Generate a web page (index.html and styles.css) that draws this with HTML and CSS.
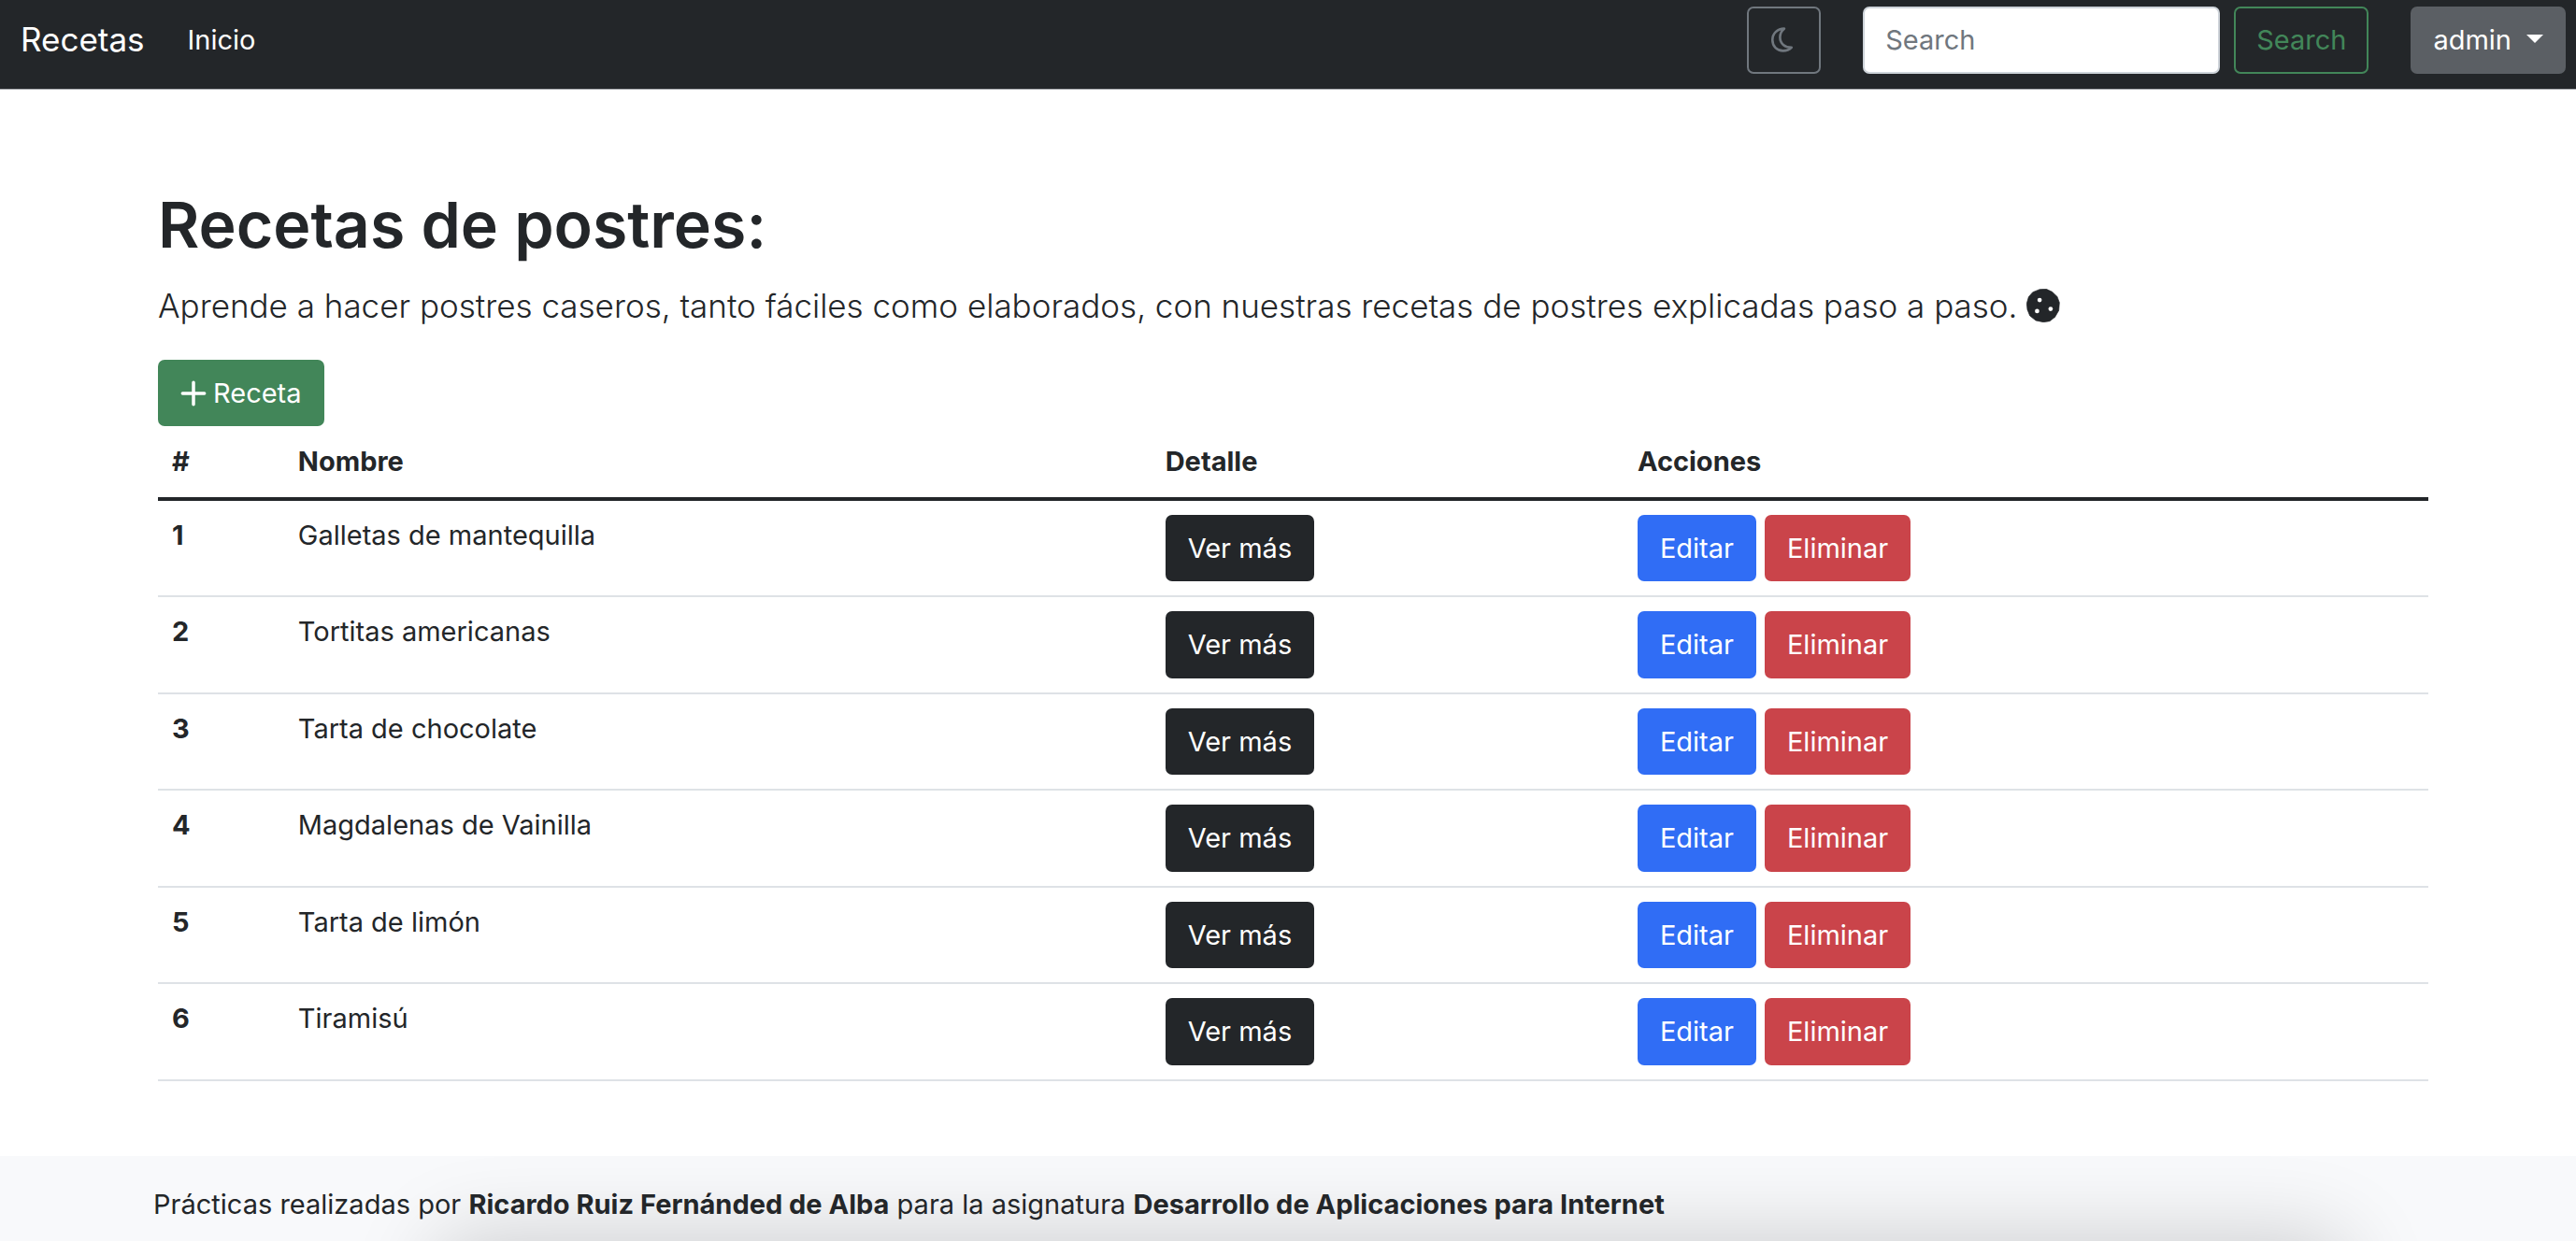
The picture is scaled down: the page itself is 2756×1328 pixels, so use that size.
FILE: index.html
```html
<!DOCTYPE html>
<html lang="es">
<head>
  <meta charset="utf-8">
  <meta name="viewport" content="width=device-width, initial-scale=1">
  <title>Recetas</title>
  <link rel="stylesheet" href="styles.css">
</head>
<body>
  <header class="navbar">
    <a class="navbar-brand" href="#">Recetas</a>
    <nav class="navbar-nav">
      <a class="nav-link" href="#">Inicio</a>
    </nav>
    <button class="btn btn-theme" type="button" aria-label="Modo oscuro">
      <svg class="icon-moon" viewBox="104 87 74 81" aria-hidden="true"><path d="M147 91C124 91 108 107 108 128C108 149 123 164 143 164C155 164 164 160 171 153C149 153 133 141 133 119C133 107 138 98 147 91Z" fill="none" stroke="currentColor" stroke-width="8" stroke-linejoin="round"/></svg>
    </button>
    <form class="search" role="search">
      <input class="search-input" type="search" placeholder="Search" aria-label="Search">
      <button class="btn btn-outline" type="submit">Search</button>
    </form>
    <button class="btn btn-user" type="button" aria-haspopup="true">admin<span class="caret"></span></button>
  </header>

  <main class="container">
    <h1 class="title">Recetas de postres:</h1>
    <p class="lead">Aprende a hacer postres caseros, tanto fáciles como elaborados, con nuestras recetas de postres explicadas paso a paso.
      <svg class="icon-cookie" viewBox="66 57 105 107" aria-hidden="true"><path fill="currentColor" d="M107 59L128 58L147 67L163 82L170 101L168 126L156 147L139 160L119 163L95 158L76 143L68 123L66 104L72 83L85 68Z" stroke="currentColor" stroke-width="2" stroke-linejoin="round"/><g fill="#fff"><circle cx="107" cy="93" r="7"/><circle cx="99" cy="128" r="7"/><circle cx="142" cy="121" r="7"/></g></svg></p>
    <a class="btn btn-success" href="#"><svg class="icon-plus" viewBox="0 0 24 24" aria-hidden="true"><path d="M12 2V22M2 12H22" fill="none" stroke="currentColor" stroke-width="3" stroke-linecap="round"/></svg>Receta</a>
    <table class="table">
      <colgroup><col class="col-num"><col class="col-name"><col class="col-detail"><col></colgroup>
      <thead>
        <tr><th scope="col">#</th><th scope="col">Nombre</th><th scope="col">Detalle</th><th scope="col">Acciones</th></tr>
      </thead>
      <tbody>
        <tr><th scope="row">1</th><td>Galletas de mantequilla</td><td><a class="btn btn-dark" href="#">Ver más</a></td><td><div class="actions"><a class="btn btn-primary" href="#">Editar</a><button class="btn btn-danger" type="button">Eliminar</button></div></td></tr>
        <tr><th scope="row">2</th><td>Tortitas americanas</td><td><a class="btn btn-dark" href="#">Ver más</a></td><td><div class="actions"><a class="btn btn-primary" href="#">Editar</a><button class="btn btn-danger" type="button">Eliminar</button></div></td></tr>
        <tr><th scope="row">3</th><td>Tarta de chocolate</td><td><a class="btn btn-dark" href="#">Ver más</a></td><td><div class="actions"><a class="btn btn-primary" href="#">Editar</a><button class="btn btn-danger" type="button">Eliminar</button></div></td></tr>
        <tr><th scope="row">4</th><td>Magdalenas de Vainilla</td><td><a class="btn btn-dark" href="#">Ver más</a></td><td><div class="actions"><a class="btn btn-primary" href="#">Editar</a><button class="btn btn-danger" type="button">Eliminar</button></div></td></tr>
        <tr><th scope="row">5</th><td>Tarta de limón</td><td><a class="btn btn-dark" href="#">Ver más</a></td><td><div class="actions"><a class="btn btn-primary" href="#">Editar</a><button class="btn btn-danger" type="button">Eliminar</button></div></td></tr>
        <tr><th scope="row">6</th><td>Tiramisú</td><td><a class="btn btn-dark" href="#">Ver más</a></td><td><div class="actions"><a class="btn btn-primary" href="#">Editar</a><button class="btn btn-danger" type="button">Eliminar</button></div></td></tr>
      </tbody>
    </table>
  </main>

  <footer class="footer">
    <p class="footer-text">Prácticas realizadas por <strong>Ricardo Ruiz Fernánded de Alba</strong> para la asignatura <strong>Desarrollo de Aplicaciones para Internet</strong></p>
  </footer>
</body>
</html>
```
FILE: styles.css
```css
*, *::before, *::after { box-sizing: border-box; }

body {
  margin: 0;
  min-height: 100vh;
  display: flex;
  flex-direction: column;
  font-family: Inter, "Liberation Sans", sans-serif;
  font-size: 29px;
  line-height: 1.5;
  color: #232629;
  background: #fff;
}

/* Buttons */
.btn {
  display: inline-block;
  padding: 12px 22px;
  border: 2px solid transparent;
  border-radius: 7px;
  font: inherit;
  line-height: 1.5;
  color: #fff;
  background: transparent;
  text-decoration: none;
  white-space: nowrap;
}
.btn-success { background: #428659; }
.btn-dark { background: #232629; }
.btn-primary { background: #306df5; }
.btn-danger { background: #ca444a; }
.btn-outline { color: #428659; border-color: #428659; }

/* Navbar */
.navbar {
  display: flex;
  align-items: flex-start;
  padding: 7px 11px 16px 22px;
  background: #232629;
  border-bottom: 1px solid #a9acb0;
}
.navbar-brand {
  margin-right: 32px;
  padding: 9px 0;
  font-size: 35px;
  color: #fff;
  text-decoration: none;
}
.navbar-nav { flex: 1; }
.nav-link {
  display: inline-block;
  padding: 14px;
  color: #fff;
  text-decoration: none;
}
.btn-theme {
  display: flex;
  align-items: center;
  align-self: stretch;
  width: 79px;
  padding: 0 24px;
  color: #70777e;
  border-color: #70777e;
}
.icon-moon { width: 24px; height: 27px; }
.search {
  display: flex;
  gap: 15px;
  margin: 0 45px;
}
.search-input {
  width: 382px;
  padding: 12px 22px;
  border: 2px solid #ced4da;
  border-radius: 7px;
  font: inherit;
  line-height: 1.5;
  background: #fff;
  appearance: none;
}
.search-input::placeholder { color: #70777e; opacity: 1; }
.btn-user { background: #5b5f64; }
.caret {
  display: inline-block;
  margin-left: 16px;
  vertical-align: 7px;
  border: 9px solid transparent;
  border-top-color: #fff;
  border-bottom: 0;
}

/* Content */
.container {
  flex: 1;
  padding: 100px 158px 79px 169px;
}
.title {
  margin: 0 0 15px;
  font-size: 68px;
  font-weight: 600;
  line-height: 88px;
}
.lead {
  margin: 0 0 30px;
  font-size: 35px;
  font-weight: 300;
  line-height: 56px;
}
.icon-cookie { width: 36px; height: 36px; vertical-align: -5px; }
.icon-plus { width: 28px; height: 28px; margin-right: 7px; vertical-align: -4px; }

.table {
  width: 100%;
  margin-top: 1px;
  table-layout: fixed;
  border-collapse: separate;
  border-spacing: 0;
}
.col-num { width: 5.55%; }
.col-name { width: 38.2%; }
.col-detail { width: 20.8%; }
.table th, .table td {
  padding: 15px;
  border-bottom: 2px solid #dee2e6;
  text-align: left;
  vertical-align: top;
}
.table thead th { padding-bottom: 16px; border-bottom: 4px solid #232629; }
.table td .btn { display: block; width: fit-content; }
.actions { display: flex; gap: 9px; }

/* Footer */
.footer {
  position: relative;
  overflow: hidden;
  padding: 30px 164px 18px;
  background: #f8f9fb;
}
.footer::after {
  content: "";
  position: absolute;
  top: 100%;
  left: 17%;
  right: 9%;
  height: 100px;
  border-radius: 30px;
  box-shadow: 0 0 90px 4px rgba(0, 0, 0, 0.18);
}
.footer-text {
  position: relative;
  z-index: 1;
  margin: 0;
}
```
